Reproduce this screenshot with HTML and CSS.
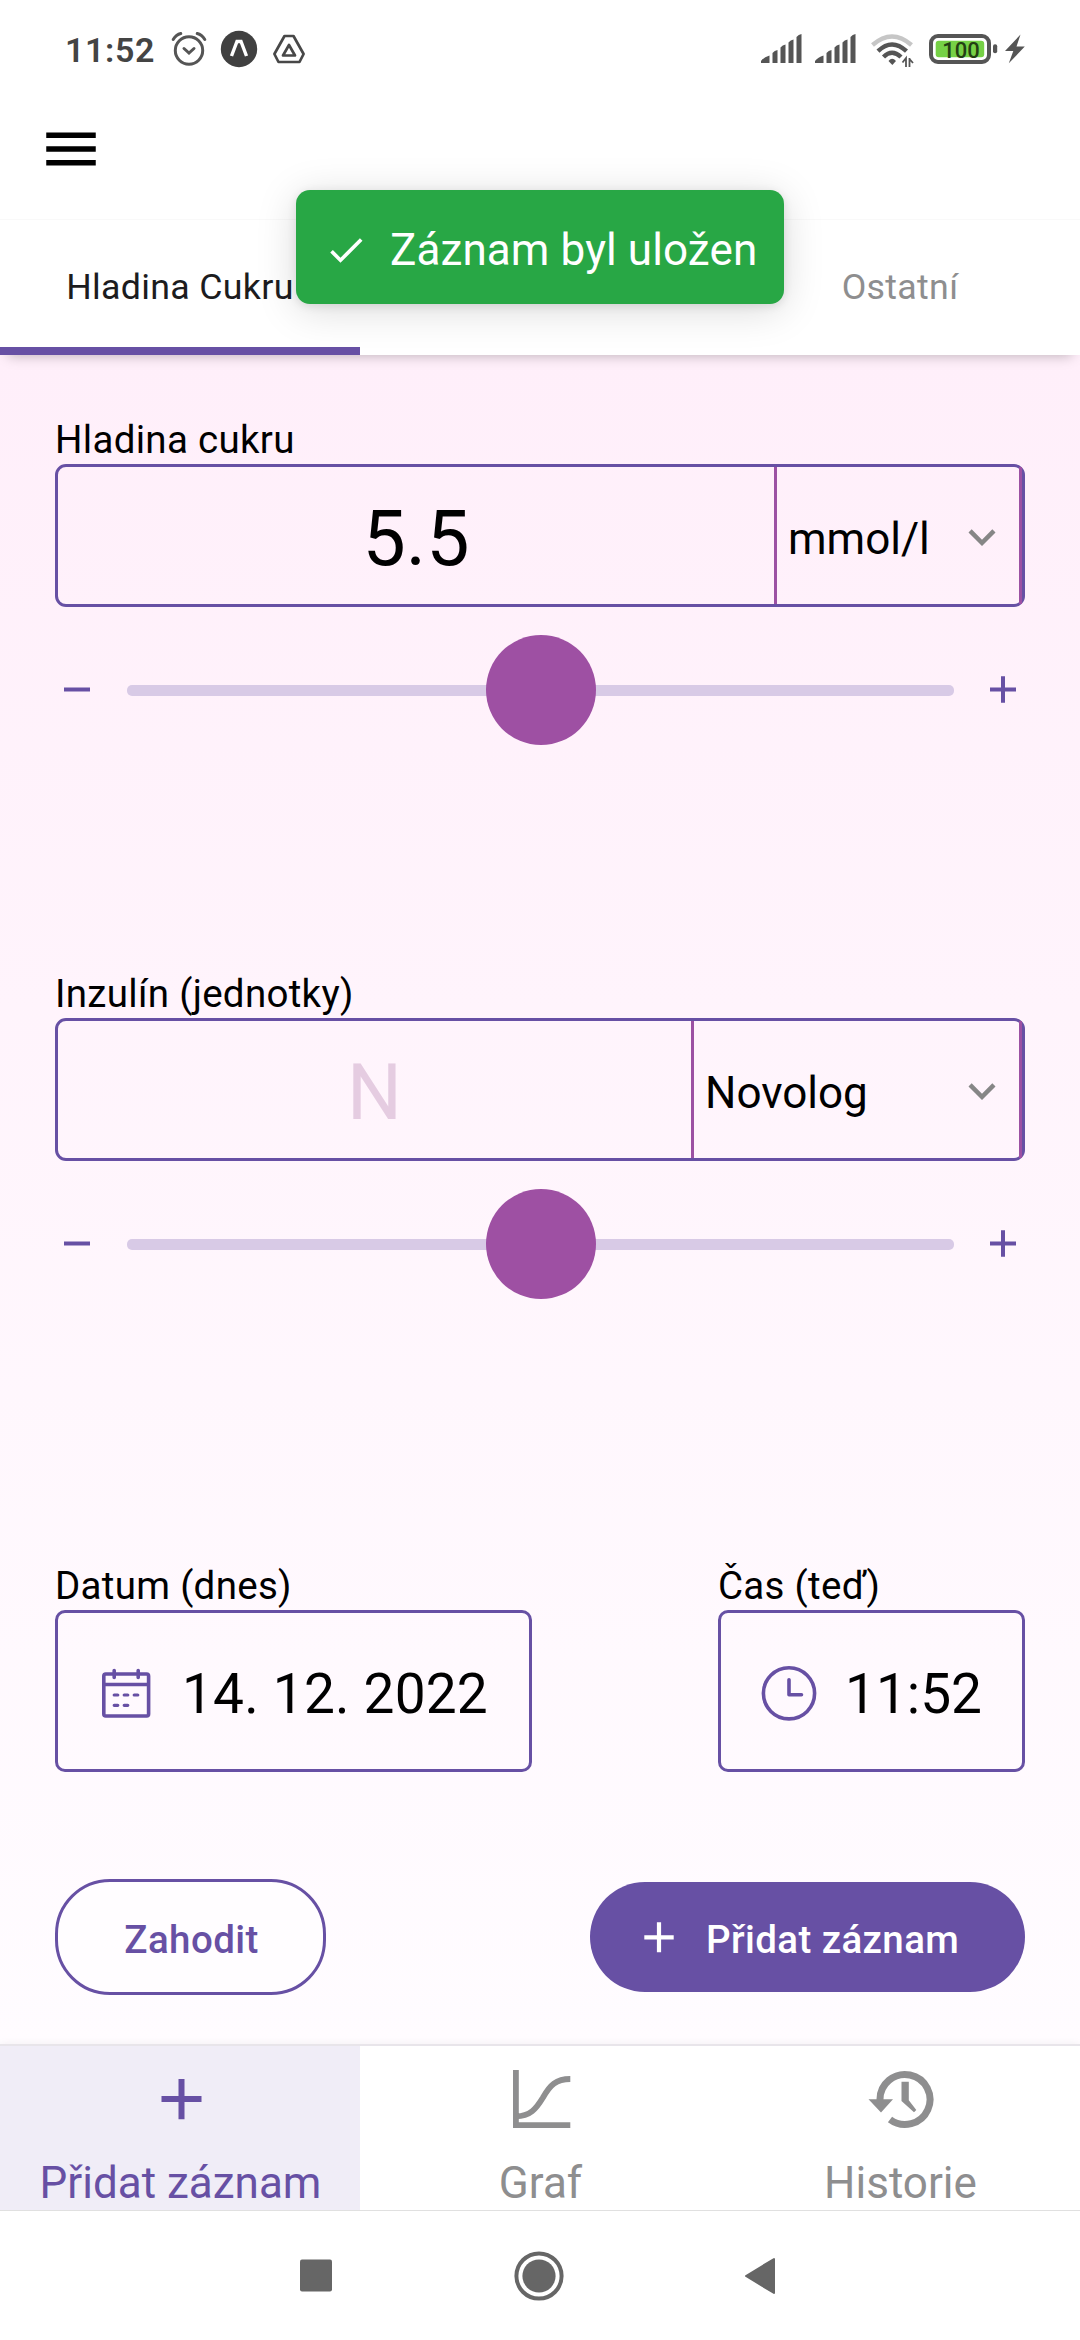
FILE: index.html
```html
<!DOCTYPE html>
<html lang="cs">
<head>
<meta charset="utf-8">
<title>Přidat záznam</title>
<link rel="stylesheet" href="styles.css">
</head>
<body>
<div class="screen">
  <div class="statusbar">
    <div class="status-left">
      <span class="status-time">11:52</span>
      <svg class="ic-alarm" width="36" height="36" viewBox="0 0 36 36" fill="none" stroke="#555" stroke-width="3" stroke-linecap="round">
        <circle cx="18" cy="19.500" r="13.700"/><path d="M13 17.500l5 4.500 5-4.500M2.200 8.500q3-5 7.600-6M33.800 8.500q-3-5-7.600-6"/>
      </svg>
      <svg class="ic-expo" width="38" height="38" viewBox="0 0 38 38">
        <circle cx="19" cy="19" r="18.200" fill="#404040"/><path d="M11.500 26L17 11.500h4L26.500 26" fill="none" stroke="#fff" stroke-width="3.400"/>
      </svg>
      <svg class="ic-drive" width="34" height="32" viewBox="0 0 34 32" fill="none" stroke="#484848" stroke-width="2.700" stroke-linejoin="round">
        <path d="M12.500 3h9L31.600 21l-4.100 8h-21L2.400 21z"/><path d="M17 12l6 10.500H11z"/>
      </svg>
    </div>
    <div class="status-right">
      <svg class="ic-signal" width="41" height="30" viewBox="0 0 41 30" fill="#555">
        <path d="M0 29V27q3-4 8.500-5.500V29zM11.500 29V19q2-2.500 5-3v13zM19.500 29V13.500q2-2.500 5-3V29zM27.500 29V8.500q2-2.500 5-3V29zM35.500 29V3q2-2.500 5-3v29z"/>
      </svg>
      <svg class="ic-signal" width="41" height="30" viewBox="0 0 41 30" fill="#555">
        <path d="M0 29V27q3-4 8.500-5.500V29zM11.500 29V19q2-2.500 5-3v13zM19.500 29V13.500q2-2.500 5-3V29zM27.500 29V8.500q2-2.500 5-3V29zM35.500 29V3q2-2.500 5-3v29z"/>
      </svg>
      <svg class="ic-wifi" width="43" height="34" viewBox="0 0 43 34" fill="none" stroke="#555" stroke-width="4.400">
        <path stroke="#c6c6c6" d="M1.500 11Q21 -6 40.500 11"/>
        <path d="M7 17.200Q21 3.800 35.500 17.200"/><path d="M12.500 23Q21 14.500 30 23"/>
        <path d="M17.500 27q3.500-4.500 7.500 0l-3.700 4z" fill="#555" stroke="none"/>
        <path stroke-width="1.800" d="M35 33V24l-3.500 4.500M38.500 24v9M38.500 25l3.500 4"/>
      </svg>
      <svg class="ic-battery" width="69" height="30" viewBox="0 0 69 30">
        <rect x="2" y="2" width="58" height="26" rx="7" fill="none" stroke="#555" stroke-width="4"/>
        <rect x="6.700" y="6.700" width="48.500" height="16.600" rx="3" fill="#76d146"/>
        <rect x="64" y="10.300" width="4.200" height="9" rx="2" fill="#555"/>
        <text class="battery-text" x="32" y="24" text-anchor="middle">100</text>
      </svg>
      <svg class="ic-bolt" width="20" height="30" viewBox="0 0 20 30" fill="#555"><path d="M15.500 .5L0 17h8.300L3.800 29.300 19.800 12.500H11.500z"/></svg>
    </div>
  </div>

  <div class="header">
    <svg width="66" height="66" viewBox="0 0 24 24"><path d="M3 18h18v-2H3v2zm0-5h18v-2H3v2zm0-7v2h18V6H3z"/></svg>
  </div>

  <div class="tabs">
    <div class="tab tab-active">Hladina Cukru</div>
    <div class="tab"></div>
    <div class="tab">Ostatní</div>
  </div>

  <div class="content">
    <div class="label">Hladina cukru</div>
    <div class="field">
      <div class="value">5.5</div>
      <div class="select select-unit"><span>mmol/l</span>
        <svg width="54" height="54" viewBox="0 0 24 24" fill="#868686"><path d="M7.410 8.590L12 13.170l4.590-4.580L18 10l-6 6-6-6z"/></svg>
      </div>
    </div>
    <div class="slider">
      <svg width="44" height="44" viewBox="0 0 44 44" stroke="#6750a4" stroke-width="4"><path d="M9 21.500h26"/></svg>
      <div class="track"><div class="thumb"></div></div>
      <svg width="44" height="44" viewBox="0 0 44 44" stroke="#6750a4" stroke-width="4"><path d="M9 21.500h26M22 8.300v26.400"/></svg>
    </div>

    <div class="label label-insulin">Inzulín (jednotky)</div>
    <div class="field">
      <div class="value placeholder">N</div>
      <div class="select select-insulin"><span>Novolog</span>
        <svg width="54" height="54" viewBox="0 0 24 24" fill="#868686"><path d="M7.410 8.590L12 13.170l4.590-4.580L18 10l-6 6-6-6z"/></svg>
      </div>
    </div>
    <div class="slider">
      <svg width="44" height="44" viewBox="0 0 44 44" stroke="#6750a4" stroke-width="4"><path d="M9 21.500h26"/></svg>
      <div class="track"><div class="thumb"></div></div>
      <svg width="44" height="44" viewBox="0 0 44 44" stroke="#6750a4" stroke-width="4"><path d="M9 21.500h26M22 8.300v26.400"/></svg>
    </div>

    <div class="datetime">
      <div>
        <div class="label">Datum (dnes)</div>
        <div class="picker picker-date">
          <svg width="60" height="60" viewBox="0 0 60 60" fill="none" stroke="#6750a4" stroke-width="3.600" stroke-linecap="round">
            <rect x="7.800" y="11" width="44.800" height="42" rx="2"/><path d="M8 21.500h44M18.200 7.500v7M42.200 7.500v7"/>
            <path stroke-width="3.200" d="M18.200 32h3.600M28.200 32h3.600M38.200 32h3.600M18.200 42.300h3.600M28.200 42.300h3.600"/>
          </svg>
          <span>14. 12. 2022</span>
        </div>
      </div>
      <div>
        <div class="label label-time">Čas (teď)</div>
        <div class="picker picker-time">
          <svg width="60" height="60" viewBox="0 0 60 60" fill="none" stroke="#6750a4" stroke-width="3.600" stroke-linecap="round" stroke-linejoin="round">
            <circle cx="30" cy="30.300" r="25.600"/><path d="M30 16.800v15h12.500"/>
          </svg>
          <span>11:52</span>
        </div>
      </div>
    </div>

    <div class="actions">
      <div class="btn btn-outline">Zahodit</div>
      <div class="btn btn-primary">
        <svg width="50" height="50" viewBox="0 0 50 50" stroke="#fff" stroke-width="4.200"><path d="M10.300 25.300h29.400M25 10.300v30"/></svg>
        <span>Přidat záznam</span>
      </div>
    </div>
  </div>

  <div class="bottom-tabs">
    <div class="bottom-tab bottom-tab-active">
      <svg width="66" height="66" viewBox="0 0 66 66" stroke="#6750a4" stroke-width="6"><path d="M13.500 33h40M33.500 12.900v40.400"/></svg>
      <span>Přidat záznam</span>
    </div>
    <div class="bottom-tab">
      <svg width="66" height="66" viewBox="0 0 66 66" fill="none" stroke="#8e8e8f" stroke-width="5.800"><path d="M7.900 4v55.100h54.400M8 50.300C22 50.300 28 43 35 31.500C42 19 48 13 62.300 13"/></svg>
      <span>Graf</span>
    </div>
    <div class="bottom-tab">
      <svg width="66" height="66" viewBox="0 0 66 66" fill="#8e8e8f">
        <path fill="none" stroke="#8e8e8f" stroke-width="7" d="M12 34A25 25 0 1 1 22 53.500"/>
        <path d="M.500 33.200H25L13 46.500zM33.500 15.700h7.300v18.500L48.300 44l-2.300 2.300L33.500 35z"/>
      </svg>
      <span>Historie</span>
    </div>
  </div>

  <div class="navbar">
    <svg width="32" height="50" viewBox="0 0 32 50"><rect y="8.500" width="32" height="32" rx="2" fill="#666"/></svg>
    <svg width="50" height="50" viewBox="0 0 50 50"><circle cx="25" cy="25" r="22.600" fill="none" stroke="#666" stroke-width="4"/><circle cx="25" cy="25" r="16.600" fill="#666"/></svg>
    <svg width="32" height="50" viewBox="0 0 32 50"><path d="M2 25L30 8v34z" fill="#666" stroke="#666" stroke-width="2" stroke-linejoin="round"/></svg>
  </div>

  <div class="toast">
    <svg width="44" height="44" viewBox="0 0 24 24" fill="#fff"><path d="M9 16.170L4.830 12l-1.420 1.410L9 19 21 7l-1.410-1.410z"/></svg>
    <span>Záznam byl uložen</span>
  </div>
</div>
</body>
</html>
```
FILE: styles.css
```css
* { box-sizing: border-box; }
body { margin: 0; font-family: Roboto, "Noto Sans", sans-serif; color: #000; }
svg { display: block; flex: none; }
.screen {
  position: relative;
  width: 1080px;
  height: 2340px;
  display: flex;
  flex-direction: column;
  background: #fff;
  overflow: hidden;
  white-space: nowrap;
}

.statusbar {
  height: 98px;
  display: flex;
  justify-content: space-between;
  padding: 0 55px 0 65px;
}
.status-left, .status-right { display: flex; align-items: center; }
.status-time {
  width: 106px;
  padding-top: 2px;
  font-size: 34px;
  font-weight: 600;
  letter-spacing: 0.6px;
  color: #444;
}
.ic-expo { margin-left: 13px; }
.ic-drive { margin-left: 14px; }
.ic-signal { margin-right: 13px; }
.ic-wifi { margin: 3px 15px 0 2px; }
.ic-bolt { margin-left: 7px; }
.battery-text { font-size: 22px; font-weight: 500; fill: #233f14; }

.header { height: 121px; padding: 18px 0 0 38px; }

.tabs {
  height: 136px;
  display: grid;
  grid-template-columns: repeat(3, 1fr);
  background: #fff;
  border-top: 1px solid #f9f9f9;
  box-shadow: 0 9px 12px -8px rgba(0, 0, 0, 0.25);
  z-index: 1;
}
.tab {
  display: flex;
  align-items: center;
  justify-content: center;
  font-size: 35.75px;
  letter-spacing: 0.3px;
  color: #8e8e8f;
  padding-top: 6px;
  border-bottom: 8px solid transparent;
}
.tab-active { color: #1c1c1e; border-bottom-color: #6750a4; }

.content {
  height: 1689px;
  padding: 62px 55px 0;
  background: linear-gradient(#ffeffa, #fffcff);
}
.label { height: 47px; line-height: 46px; font-size: 38.5px; letter-spacing: 0.3px; }
.label-insulin { margin-top: 226px; }
.field {
  display: flex;
  height: 143px;
  border: 3px solid #6750a4;
  border-radius: 11px;
}
.value {
  flex: 1;
  display: flex;
  align-items: center;
  justify-content: center;
  padding-top: 6px;
  font-size: 77px;
  line-height: 90px;
}
.placeholder { color: #e5cce1; }
.select {
  display: flex;
  align-items: center;
  justify-content: space-between;
  padding: 7px 10px 0 11px;
  border: 3px solid #9c51a3;
  border-width: 0 3px;
  font-size: 44px;
}
.select svg { margin-top: -5px; }
.select-unit { width: 248px; }
.select-insulin { width: 331px; }

.slider {
  height: 110px;
  margin-top: 28px;
  display: flex;
  align-items: center;
}
.track {
  flex: 1;
  height: 11px;
  margin: 1px 27px 0 28px;
  display: flex;
  align-items: center;
  justify-content: center;
  border-radius: 5px;
  background: #d8cae6;
}
.thumb {
  flex: none;
  width: 110px;
  height: 110px;
  margin-top: -1px;
  border-radius: 50%;
  background: #9e50a3;
}

.datetime { display: flex; justify-content: space-between; margin-top: 264px; }
.picker {
  height: 162px;
  display: flex;
  align-items: center;
  border: 3px solid #6750a4;
  border-radius: 10px;
  font-size: 55px;
}
.picker svg { margin-top: 4px; }
.picker span { padding-top: 6px; }
.picker-date { width: 477px; padding-left: 38px; gap: 26px; letter-spacing: 0.2px; }
.picker-time { width: 307px; padding-left: 38px; gap: 26px; }

.actions {
  height: 116px;
  margin-top: 107px;
  display: flex;
  align-items: center;
  justify-content: space-between;
}
.btn {
  display: flex;
  align-items: center;
  border-radius: 55px;
  font-size: 38.5px;
  font-weight: 500;
  letter-spacing: 0.4px;
}
.btn-outline {
  width: 271px;
  height: 116px;
  justify-content: center;
  padding: 4px 0 0 2px;
  border: 3px solid #6750a4;
  color: #6750a4;
  background: #fffdff;
}
.btn-primary {
  width: 435px;
  height: 110px;
  padding-left: 44px;
  gap: 22px;
  background: #6750a4;
  color: #fff;
}
.btn-primary span { padding-top: 4px; }

.bottom-tabs {
  height: 167px;
  display: grid;
  grid-template-columns: repeat(3, 1fr);
  border-top: 2px solid #e8e5ea;
  border-bottom: 1px solid #e0e0e0;
  box-shadow: 0 0 8px rgba(0, 0, 0, 0.06);
  background: #fff;
}
.bottom-tab {
  display: flex;
  flex-direction: column;
  align-items: center;
  padding: 20px 0 0 1px;
  font-size: 44px;
  line-height: 52px;
  color: #8e8e8f;
}
.bottom-tab span { margin-top: 25px; }
.bottom-tab-active { background: #f0edf7; color: #6750a4; }

.navbar {
  height: 129px;
  display: flex;
  align-items: center;
  padding-left: 300px;
  background: #fff;
  z-index: 1;
}
.navbar svg + svg { margin-left: 182px; }
.navbar svg:last-child { margin-left: 180px; }

.toast {
  position: absolute;
  left: 296px;
  top: 190px;
  z-index: 2;
  width: 488px;
  height: 114px;
  display: flex;
  align-items: center;
  padding: 6px 0 0 28px;
  gap: 22px;
  border-radius: 14px;
  background: #28a745;
  color: #fff;
  font-size: 44px;
  letter-spacing: 0.1px;
  box-shadow: 0 6px 40px rgba(0, 0, 0, 0.15), 0 2px 10px rgba(0, 0, 0, 0.1);
}
```
